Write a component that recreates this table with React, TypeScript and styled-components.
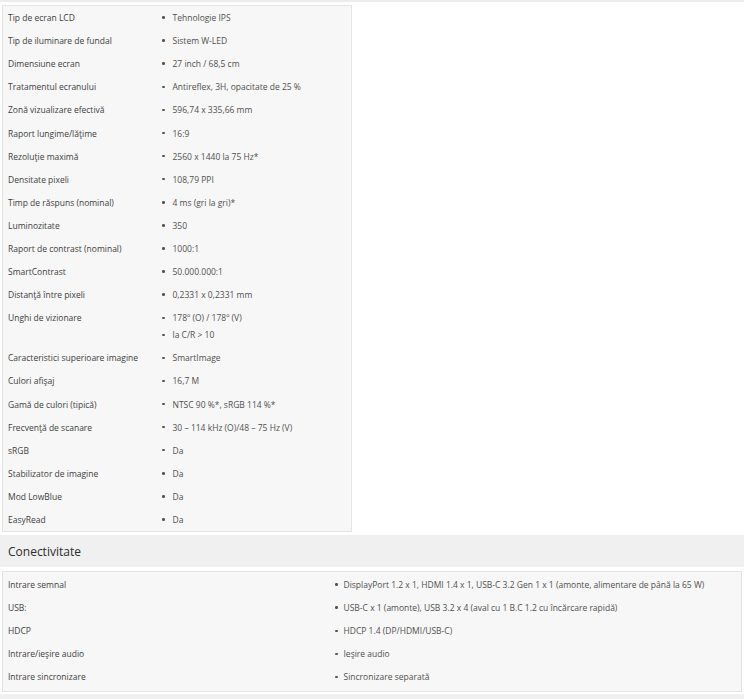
import React from 'react';
import styled, { createGlobalStyle } from 'styled-components';

const GlobalStyle = createGlobalStyle`
  html, body { margin: 0; padding: 0; background: #fff; }
  body { font-family: 'Open Sans', 'Liberation Sans', sans-serif; color: #3c3c3c; }
`;

const TopStrip = styled.div`
  height: 2px;
  background: #ececec;
  margin-bottom: 3px;
`;

const Panel = styled.div<{ $wide?: boolean }>`
  box-sizing: border-box;
  margin-left: 2px;
  width: ${p => (p.$wide ? '740px' : '350px')};
  background: #f7f7f7;
  border: 1px solid #e4e4e4;
  padding: ${p => (p.$wide ? '1px 0 2px' : '0')};
`;

const Row = styled.div<{ $labelWidth: number }>`
  display: grid;
  grid-template-columns: ${p => p.$labelWidth}px 1fr;
  padding: 3.05px 0;
  font-size: 8.5px;
  line-height: 17px;
`;

const Label = styled.div`
  padding-left: 5px;
  color: #404040;
  white-space: nowrap;
`;

const Values = styled.ul`
  margin: 0;
  padding: 0;
  list-style: none;
`;

const Value = styled.li<{ $gap: number }>`
  display: flex;
  align-items: center;
  color: #505050;
  white-space: nowrap;
  &::before {
    content: '';
    width: 2.5px;
    height: 2.5px;
    border-radius: 50%;
    background: #555;
    margin-right: ${p => p.$gap}px;
    flex: none;
  }
`;

const SectionHeader = styled.div`
  margin: 3px 0 4px;
  height: 32px;
  background: #f0f0f0;
  display: flex;
  align-items: center;
  padding-left: 8px;
  font-size: 12px;
  color: #2b2b2b;
`;

const NextBand = styled.div`
  margin-top: 2px;
  height: 10px;
  background: #f0f0f0;
`;

type Spec = [string, string[]];

const display: Spec[] = [
  ['Tip de ecran LCD', ['Tehnologie IPS']],
  ['Tip de iluminare de fundal', ['Sistem W-LED']],
  ['Dimensiune ecran', ['27 inch / 68,5 cm']],
  ['Tratamentul ecranului', ['Antireflex, 3H, opacitate de 25 %']],
  ['Zonă vizualizare efectivă', ['596,74 x 335,66 mm']],
  ['Raport lungime/lăţime', ['16:9']],
  ['Rezoluţie maximă', ['2560 x 1440 la 75 Hz*']],
  ['Densitate pixeli', ['108,79 PPI']],
  ['Timp de răspuns (nominal)', ['4 ms (gri la gri)*']],
  ['Luminozitate', ['350']],
  ['Raport de contrast (nominal)', ['1000:1']],
  ['SmartContrast', ['50.000.000:1']],
  ['Distanţă între pixeli', ['0,2331 x 0,2331 mm']],
  ['Unghi de vizionare', ['178º (O) / 178º (V)', 'la C/R > 10']],
  ['Caracteristici superioare imagine', ['SmartImage']],
  ['Culori afişaj', ['16,7 M']],
  ['Gamă de culori (tipică)', ['NTSC 90 %*, sRGB 114 %*']],
  ['Frecvenţă de scanare', ['30 – 114 kHz (O)/48 – 75 Hz (V)']],
  ['sRGB', ['Da']],
  ['Stabilizator de imagine', ['Da']],
  ['Mod LowBlue', ['Da']],
  ['EasyRead', ['Da']],
];

const connectivity: Spec[] = [
  ['Intrare semnal', ['DisplayPort 1.2 x 1, HDMI 1.4 x 1, USB-C 3.2 Gen 1 x 1 (amonte, alimentare de până la 65 W)']],
  ['USB:', ['USB-C x 1 (amonte), USB 3.2 x 4 (aval cu 1 B.C 1.2 cu încărcare rapidă)']],
  ['HDCP', ['HDCP 1.4 (DP/HDMI/USB-C)']],
  ['Intrare/ieşire audio', ['Ieşire audio']],
  ['Intrare sincronizare', ['Sincronizare separată']],
];

const SpecTable = ({ rows, labelWidth, gap }: { rows: Spec[]; labelWidth: number; gap: number }) => (
  <>
    {rows.map(([label, values]) => (
      <Row key={label} $labelWidth={labelWidth}>
        <Label>{label}</Label>
        <Values>
          {values.map(v => (
            <Value key={v} $gap={gap}>
              {v}
            </Value>
          ))}
        </Values>
      </Row>
    ))}
  </>
);

export default function App() {
  return (
    <>
      <GlobalStyle />
      <TopStrip />
      <Panel>
        <SpecTable rows={display} labelWidth={159} gap={8} />
      </Panel>
      <SectionHeader>Conectivitate</SectionHeader>
      <Panel $wide>
        <SpecTable rows={connectivity} labelWidth={332} gap={6} />
      </Panel>
      <NextBand />
    </>
  );
}
